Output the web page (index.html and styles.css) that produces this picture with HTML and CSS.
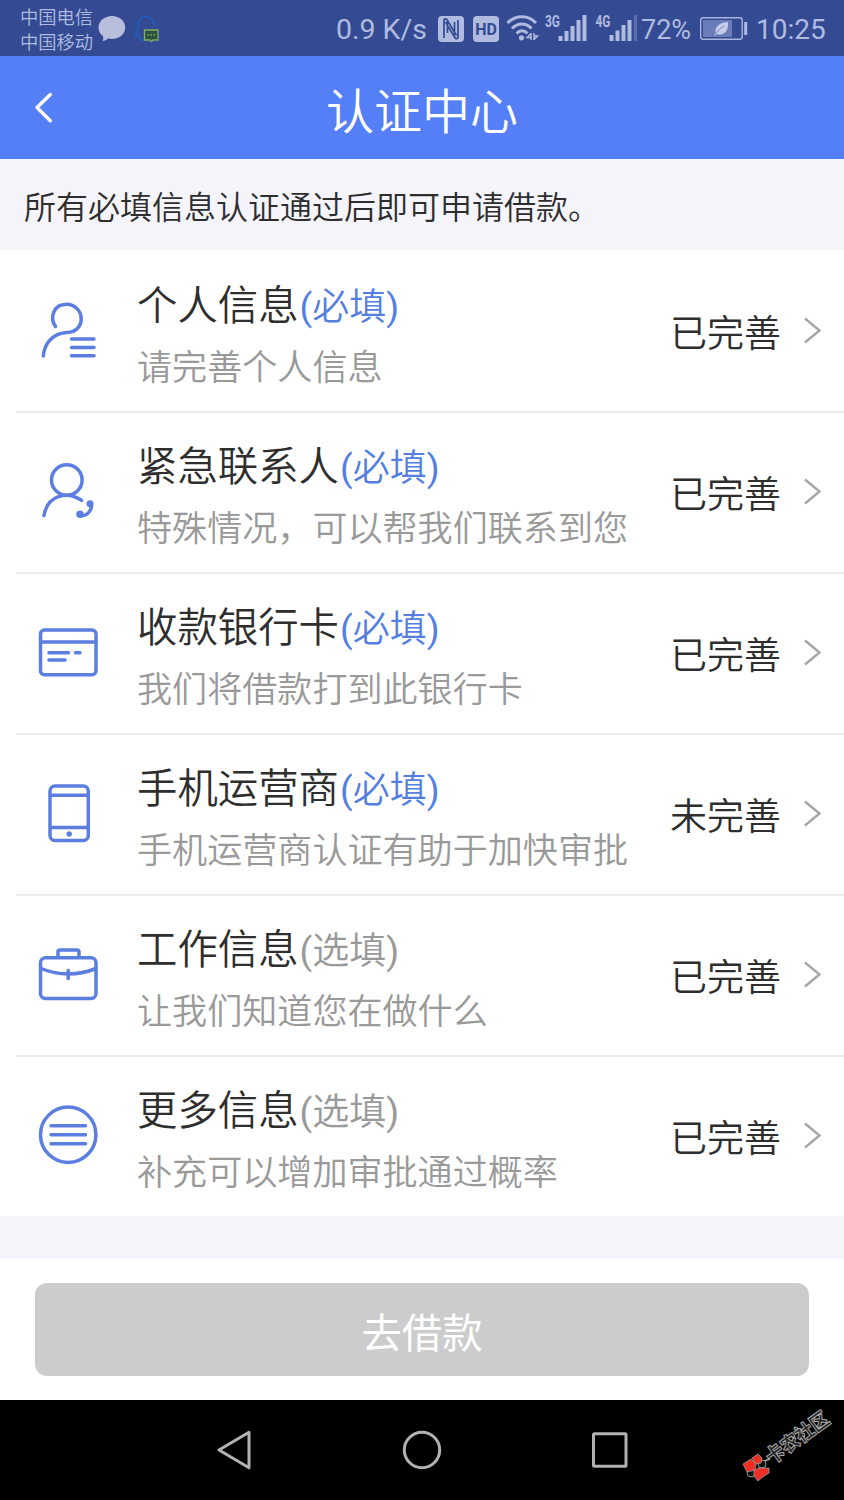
FILE: index.html
```html
<!DOCTYPE html>
<html lang="zh-CN">
<head>
<meta charset="utf-8">
<title>认证中心</title>
<link rel="stylesheet" href="styles.css">
</head>
<body>
<div class="statusbar">
  <div class="carriers"><span>中国电信</span><span>中国移动</span></div>
  <svg class="notif" width="64" height="56" viewBox="97 0 64 56">
    <path d="M112 16c7.500 0 13.200 5 13.200 11.500S119.500 39 112 39l-4-.4c-1.500 1.300-3.500 2.500-5.500 2.500 .8-1.500 1-3 .5-5-2.800-2-4.500-5-4.500-8.600C98.500 21 104.500 16 112 16z" fill="#b7bfdd"/>
    <path d="M135.500 36c0-3 2.500-5 2.500-9 0-6 3-10.500 8-10.500 4.500 0 8 3.500 8.700 9.500M135.500 36l3-1.500c1 4 3 6 6 6" fill="none" stroke="#1f5fc0" stroke-width="1.600"/>
    <path d="M144.500 30h13.500v10h-5l-1.500 1.600-1.500-1.600h-5.500z" fill="#29533d" stroke="#80ad67" stroke-width="1.300"/>
    <path d="M147.500 35h8" stroke="#80ad67" stroke-width="1.500" stroke-dasharray="1.500 1.500"/>
  </svg>
  <span class="speed">0.9 K/s</span>
  <svg class="signals" width="204" height="56" viewBox="434 0 204 56">
    <rect x="437" y="16" width="26" height="26" rx="4" fill="#b0bbe0"/>
    <path d="M443 38V19.500c1-1 2.500-1 3.500 1l9 15M446.500 21v12M457 20v18c-1 1-2.500 1-3.500-1l-9-15M453.500 22v13" fill="none" stroke="#344b93" stroke-width="1.700"/>
    <rect x="472" y="16" width="26" height="26" rx="4" fill="#b0bbe0"/>
    <text class="hd" x="485" y="35" text-anchor="middle">HD</text>
    <g fill="none" stroke="#b0bbe0" stroke-width="3">
      <path d="M506.500 23c8-8.500 21-8.500 28.500 0"/>
      <path d="M511 28.500c6-6 14-6 19.500 0"/>
      <path d="M515.500 33.500c3.500-3.500 7.500-3.500 11-.2"/>
    </g>
    <circle cx="520.500" cy="37.800" r="2.600" fill="#b0bbe0"/>
    <path d="M530 33v7M529.500 34l-3.500 3.500h3.500M533 33v7M533 39.500l3.500-3.500h-3.500" fill="none" stroke="#b0bbe0" stroke-width="1.500"/>
    <text class="net" x="544" y="27" textLength="15" lengthAdjust="spacingAndGlyphs">3G</text>
    <path d="M559.500 36v5M565.500 31v10M571.500 26v15M577.500 20v21M583.500 15v26" stroke="#b0bbe0" stroke-width="4"/>
    <text class="net" x="594.500" y="27" textLength="15" lengthAdjust="spacingAndGlyphs">4G</text>
    <path d="M610.500 35v6M616.500 30.500v10.500M622.500 25v16M628.500 20v21" stroke="#b0bbe0" stroke-width="4"/>
    <path d="M634.500 15v26" stroke="#5a6eae" stroke-width="3"/>
  </svg>
  <span class="percent">72%</span>
  <svg class="battery" width="52" height="56" viewBox="698 0 52 56">
    <rect x="700.700" y="17.700" width="41.500" height="21.500" rx="2.500" fill="none" stroke="#a9b5df" stroke-width="1.400"/>
    <path d="M703 20h29v17h-29z" fill="#6b7db9"/>
    <path d="M745.700 22v13" stroke="#b0bbe0" stroke-width="3"/>
    <path d="M728 22c.5 7-2 12-7.500 12.500-2 .2-3.500-.5-4-.7l-1.500 2-.7-.6 1.500-2.200c-1.500-4.500 2-10.500 12.200-11z" fill="#c5cdea"/>
    <path d="M716.500 33c2-3 4.500-5 7.500-7" stroke="#7082bb" stroke-width="1" fill="none"/>
  </svg>
  <span class="clock">10:25</span>
</div>

<header class="header">
  <svg class="back" width="30" height="40" viewBox="28 88 30 40"><path d="M50.300 94.500L37 107.500l13.300 13.300" fill="none" stroke="#fff" stroke-width="3.400" stroke-linecap="round" stroke-linejoin="round"/></svg>
  <h1>认证中心</h1>
</header>

<p class="notice">所有必填信息认证通过后即可申请借款。</p>

<main class="list">
  <div class="row">
    <svg class="icon" viewBox="28 290 80 80">
      <path d="M55.500 326.500c-6-8.500-2.500-22 11-22.200 8.500 0 14.700 6.700 14.700 14.600 0 7-5 13.300-14.200 13.500C54 333 44.500 342 43.300 356M71.500 339h22.500M71.500 347.500h22.500M71.500 355.700h22.500"/>
    </svg>
    <div class="info"><div class="name">个人信息<span class="need"><span class="paren">(</span>必填<span class="paren">)</span></span></div><div class="desc">请完善个人信息</div></div>
    <span class="state">已完善</span>
    <svg class="arrow" viewBox="0 0 20 30"><path d="M2 3.500l14.500 12L2 27.500"/></svg>
  </div>
  <div class="row">
    <svg class="icon" viewBox="28 290 80 80">
      <circle cx="66.800" cy="319" r="15.300"/><path d="M44 354.500c3.500-20 22.500-25 37.500-15.200"/>
      <path d="M80 354.800c7 .5 12-5 11.500-12"/><circle cx="80" cy="353.300" r="3.700" class="dot"/><circle cx="90" cy="342.800" r="3.500" class="dot"/>
    </svg>
    <div class="info"><div class="name">紧急联系人<span class="need"><span class="paren">(</span>必填<span class="paren">)</span></span></div><div class="desc">特殊情况，可以帮我们联系到您</div></div>
    <span class="state">已完善</span>
    <svg class="arrow" viewBox="0 0 20 30"><path d="M2 3.500l14.500 12L2 27.500"/></svg>
  </div>
  <div class="row">
    <svg class="icon" viewBox="28 290 80 80">
      <rect x="40.500" y="308" width="55.500" height="44.800" rx="4"/><path d="M41 320h55M49 330.700h19.500M75.500 330.700h4.500M49 338h16"/>
    </svg>
    <div class="info"><div class="name">收款银行卡<span class="need"><span class="paren">(</span>必填<span class="paren">)</span></span></div><div class="desc">我们将借款打到此银行卡</div></div>
    <span class="state">已完善</span>
    <svg class="arrow" viewBox="0 0 20 30"><path d="M2 3.500l14.500 12L2 27.500"/></svg>
  </div>
  <div class="row">
    <svg class="icon" viewBox="28 290 80 80">
      <rect x="50" y="303" width="38.300" height="54.500" rx="5"/><path d="M50.500 312.300h37.500M50.500 344.500h37.500"/><circle cx="69.200" cy="351" r="2.700" class="dot"/>
    </svg>
    <div class="info"><div class="name">手机运营商<span class="need"><span class="paren">(</span>必填<span class="paren">)</span></span></div><div class="desc">手机运营商认证有助于加快审批</div></div>
    <span class="state">未完善</span>
    <svg class="arrow" viewBox="0 0 20 30"><path d="M2 3.500l14.500 12L2 27.500"/></svg>
  </div>
  <div class="row">
    <svg class="icon" viewBox="28 290 80 80">
      <rect x="40.500" y="313.700" width="55.500" height="40.800" rx="5"/><path d="M58 313v-5q0-2 2-2h17q2 0 2 2v5M41 324.500q27 11 55 0M68.200 326.500v8"/>
    </svg>
    <div class="info"><div class="name">工作信息<span class="need optional"><span class="paren">(</span>选填<span class="paren">)</span></span></div><div class="desc">让我们知道您在做什么</div></div>
    <span class="state">已完善</span>
    <svg class="arrow" viewBox="0 0 20 30"><path d="M2 3.500l14.500 12L2 27.500"/></svg>
  </div>
  <div class="row">
    <svg class="icon" viewBox="28 290 80 80">
      <circle cx="68.200" cy="329.700" r="27.700"/><path d="M51 320.800h34.500M51 329.700h34.500M51 338.700h34.500"/>
    </svg>
    <div class="info"><div class="name">更多信息<span class="need optional"><span class="paren">(</span>选填<span class="paren">)</span></span></div><div class="desc">补充可以增加审批通过概率</div></div>
    <span class="state">已完善</span>
    <svg class="arrow" viewBox="0 0 20 30"><path d="M2 3.500l14.500 12L2 27.500"/></svg>
  </div>
</main>

<footer class="action"><button class="submit" type="button">去借款</button></footer>

<nav class="navbar">
  <svg width="844" height="100" viewBox="0 1400 844 100">
    <g fill="none" stroke="#b2b2b2" stroke-width="3" stroke-linejoin="round">
      <path d="M219 1450l30-17.700v35.400z"/>
      <circle cx="422" cy="1450" r="17.700"/>
      <rect x="593.500" y="1433.700" width="32.500" height="32.500" rx="1"/>
    </g>
    <path d="M764 1461l6-2" stroke="#a5a5a5" stroke-width="1.500"/>
    <g fill="#111" stroke="#8d9999" stroke-width="1">
      <circle cx="751" cy="1473" r="4"/><circle cx="762" cy="1464" r="4"/>
    </g>
    <g fill="#ee2e24" stroke="#a09a90" stroke-width=".8">
      <path d="M743 1464l8-5 5 5-1 6-8 2z"/>
      <path d="M752 1458l6-4 4 4-1 5-5 1z"/>
      <path d="M754 1471l4-3 11 0 0 5-5 3-6 5-4-5z"/>
    </g>
    <text class="mark" transform="translate(772 1465) rotate(-36)" textLength="73" lengthAdjust="spacingAndGlyphs">卡农社区</text>
  </svg>
</nav>
</body>
</html>
```
FILE: styles.css
```css
* { box-sizing: border-box; }
body {
  margin: 0;
  width: 844px;
  height: 1500px;
  overflow: hidden;
  background: #f4f4fa;
  font-family: "Noto Sans CJK SC", sans-serif;
  font-weight: 350;
  color: #2e2e2e;
}
svg { display: block; flex: none; }

.statusbar {
  display: flex;
  align-items: center;
  height: 56px;
  padding-left: 20px;
  background: #344b93;
  color: #b0bbe0;
  font-family: Roboto, sans-serif;
  font-weight: 400;
  font-size: 28.5px;
  white-space: nowrap;
}
.carriers {
  display: flex;
  flex-direction: column;
  width: 77px;
  padding-top: 1px;
  font: 350 18.3px/25px "Noto Sans CJK SC", sans-serif;
}
.speed { width: 98px; margin-left: 175px; padding-top: 3px; }
.signals { margin-left: 1px; }
.hd { font: 700 16px Roboto, sans-serif; fill: #344b93; }
.net { font: 700 16px Roboto, sans-serif; fill: #b0bbe0; }
.percent { width: 54px; margin-left: 2px; padding-top: 3px; font-size: 27px; }
.battery { margin-left: 3px; }
.clock { margin-left: 6px; padding-top: 3px; font-size: 28px; }

.header {
  display: grid;
  grid-template-columns: 58px 1fr 58px;
  align-items: center;
  height: 103px;
  background: #547ff7;
  color: #fff;
}
.back { margin-left: 28px; }
.header h1 { margin: 0; font-size: 48px; line-height: 60px; font-weight: 350; text-align: center; }

.notice {
  margin: 0;
  height: 91px;
  padding: 1px 0 0 24px;
  font-size: 32px;
  line-height: 91px;
}

.list { background: #fff; padding-left: 16px; }
.row {
  display: flex;
  align-items: center;
  height: 161px;
  padding: 0 21px 3px 12px;
  border-top: 2px solid #ebebeb;
}
.row:first-child { border-top-color: transparent; }
.icon {
  width: 80px;
  height: 80px;
  fill: none;
  stroke: #5b7ee0;
  stroke-width: 3.5;
  stroke-linecap: round;
}
.dot { fill: #5b7ee0; stroke: none; }
.info { flex: 1; padding: 7px 0 0 29px; }
.name { font-size: 40.4px; line-height: 62px; }
.need { margin-left: 1px; font-size: 37px; line-height: 1; color: #547fe0; }
.paren { font-family: Roboto, sans-serif; font-weight: 400; }
.need.optional { color: #999; }
.desc { font-size: 35.1px; line-height: 62px; color: #999; }
.state { padding-top: 2px; font-size: 37px; line-height: 60px; }
.arrow {
  width: 20px;
  height: 30px;
  margin-left: 22px;
  fill: none;
  stroke: #a5a5a5;
  stroke-width: 2.4;
}

.action {
  height: 141px;
  margin-top: 43px;
  padding: 24px 35px;
  background: #fff;
}
.submit {
  display: block;
  width: 774px;
  height: 93px;
  padding: 2px 0 0;
  border: 0;
  border-radius: 12px;
  background: #ccc;
  color: #fff;
  font: 400 40.4px/60px "Noto Sans CJK SC", sans-serif;
}

.navbar { height: 100px; background: #000; }
.mark { font: 900 20px "Noto Sans CJK SC", sans-serif; fill: #222; stroke: #aaa; stroke-width: 1; }
```
